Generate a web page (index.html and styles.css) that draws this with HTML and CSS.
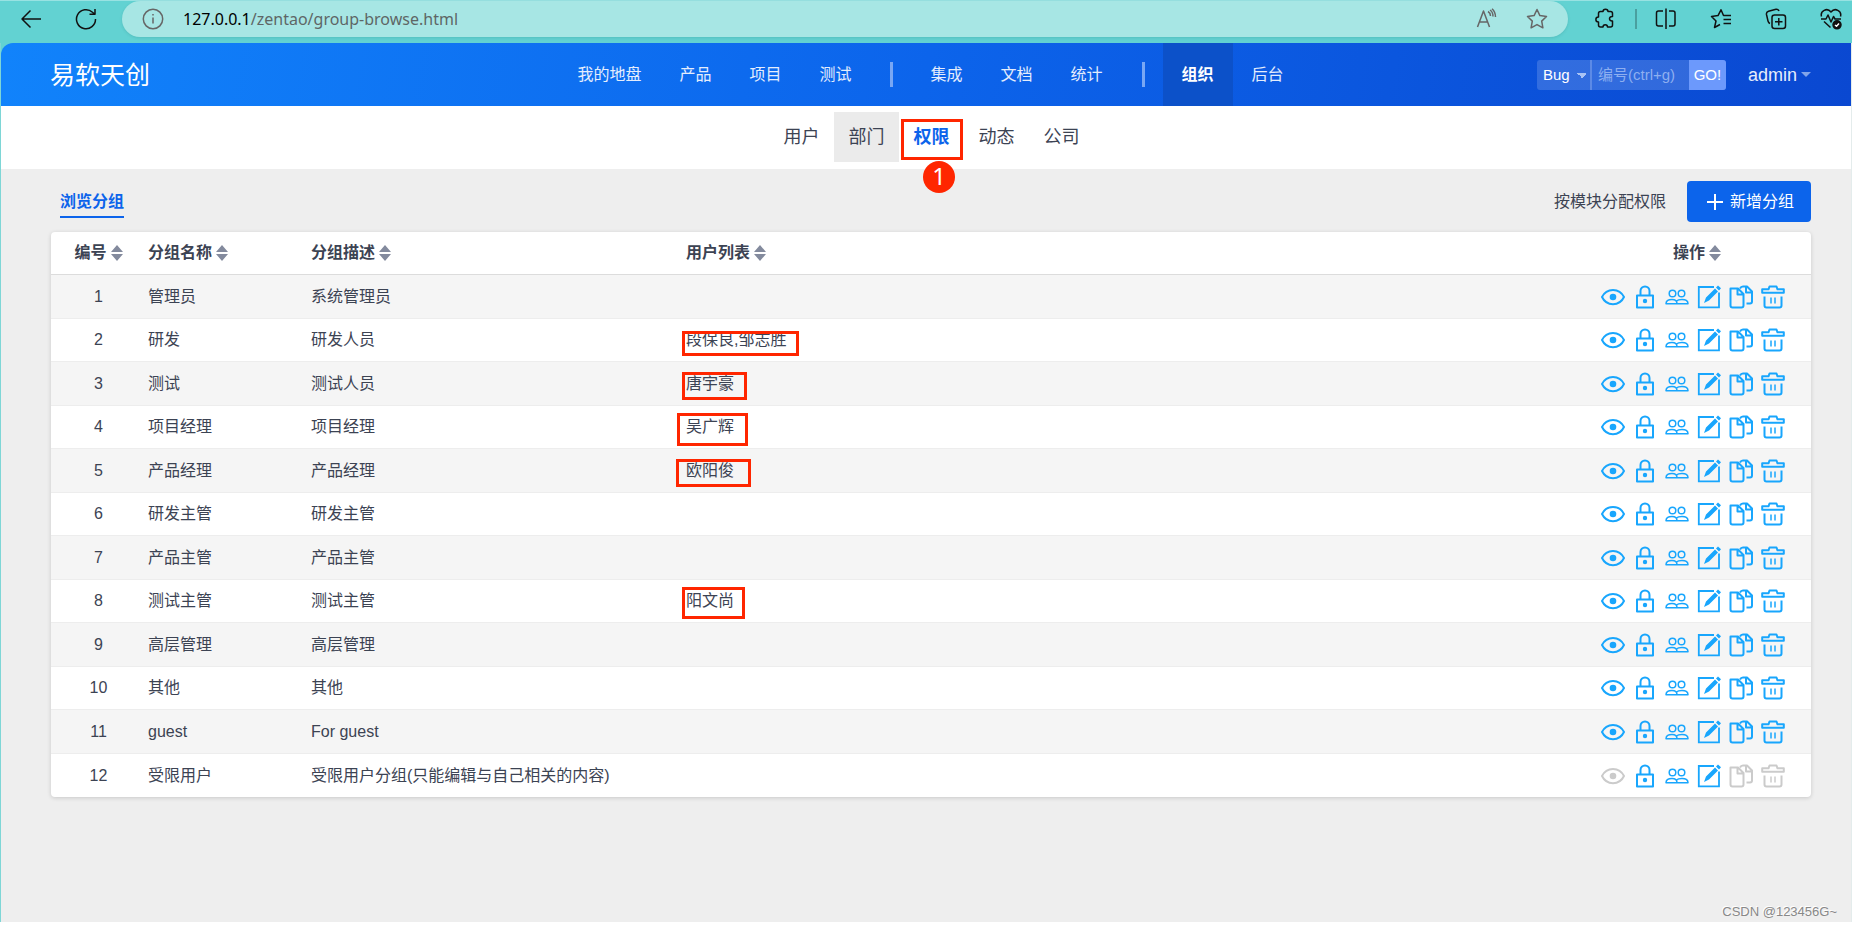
FILE: index.html
```html
<!DOCTYPE html>
<html lang="zh-CN">
<head>
<meta charset="utf-8">
<title>浏览分组</title>
<link rel="stylesheet" href="styles.css">
</head>
<body>
<svg class="sprite" aria-hidden="true">
  <symbol id="i-eye" viewBox="0 0 24 24"><path d="M1 12C5.500 2.500 18.500 2.500 23 12C18.500 21.500 5.500 21.500 1 12Z" fill="none" stroke="currentColor" stroke-width="2" stroke-linejoin="round"/><circle cx="12" cy="12" r="3.300" fill="currentColor"/></symbol>
  <symbol id="i-lock" viewBox="0 0 24 24"><path d="M4 10.500H20V22.500H4ZM7.500 10.500V6a4.500 4.500 0 0 1 9 0V10.500" fill="none" stroke="currentColor" stroke-width="2" stroke-linejoin="round"/><circle cx="12" cy="16" r="2.200" fill="currentColor"/></symbol>
  <symbol id="i-team" viewBox="0 0 24 24"><g fill="none" stroke="currentColor" stroke-width="1.500" stroke-linejoin="round"><circle cx="7.500" cy="8.500" r="3.300"/><circle cx="16.500" cy="8.500" r="3.300"/><path d="M1 18.700C1 15.500 3 14.500 7 14.500C10 14.500 12 15.500 12 18.700ZM12 18.700H23C23 15.500 21 14.500 17 14.500C14 14.500 12.500 15 11.500 16"/></g></symbol>
  <symbol id="i-edit" viewBox="0 0 24 24"><path d="M17 2H1.800V22.300H22V7.500" fill="none" stroke="currentColor" stroke-width="1.800"/><path d="M7 18L9 12.500L18 3.500L21 6.500L12 15.500ZM19 2.500L21 .500L24 3.300L22 5.500Z" fill="currentColor"/></symbol>
  <symbol id="i-copy" viewBox="0 0 24 24"><g fill="none" stroke="currentColor" stroke-width="2" stroke-linejoin="round"><path d="M1.500 3.500H9L14.500 9V20.500Q14.500 22.500 12.500 22.500H3.500Q1.500 22.500 1.500 20.500ZM8.500 4V9.500H14"/><path d="M11 3.500Q12 1.500 14 1.500H18L23 6.500V16.500Q23 18.500 21 18.500H17.500M17 2V7.500H22.500"/></g></symbol>
  <symbol id="i-trash" viewBox="0 0 24 24"><g fill="none" stroke="currentColor" stroke-width="2" stroke-linejoin="round"><path d="M1.200 7.800V4.300H7.500L8.500 1.500H15.500L16.500 4.300H22.800V7.800ZM3.500 11.500V20.500Q3.500 22.500 5.500 22.500H18.500Q20.500 22.500 20.500 20.500V11.500"/><path d="M10 12.500V18.500M14 12.500V18.500" stroke-width="1.500"/></g></symbol>
  <symbol id="i-sort" viewBox="0 0 12 16"><path d="M6 0L12 7H0ZM6 16L0 9H12Z" fill="currentColor"/></symbol>
</svg>

<div class="browser">
  <button class="chrome-btn back" aria-label="返回"><svg width="22" height="20" viewBox="0 0 22 20"><path d="M21 10H2M10.500 1.500L2 10L10.500 18.500"/></svg></button>
  <button class="chrome-btn reload" aria-label="刷新"><svg width="22" height="22" viewBox="0 0 22 22"><path d="M20.500 11A9.500 9.500 0 1 1 17.500 4.300L19.500 6M20 1V6.300H14.500"/></svg></button>
  <div class="address">
    <svg class="info" width="22" height="22" viewBox="0 0 22 22"><circle cx="11" cy="11" r="9.700"/><path d="M11 9.500V15.500M11 6V7.500"/></svg>
    <span class="url"><b>127.0.0.1</b>/zentao/group-browse.html</span>
    <svg width="22" height="22" viewBox="0 0 22 22"><path d="M1.500 19L7.500 3L13.500 19M3.500 14H11.500M12 3.500Q14.500 5 14.500 8M14 2Q17 4 17 8.500M16 .800Q19.500 4 19.500 9"/></svg>
    <svg width="22" height="22" viewBox="0 0 22 22"><path d="M11 1.500L13.900 7.600L20.500 8.500L15.700 13.100L16.900 19.800L11 16.600L5.100 19.800L6.300 13.100L1.500 8.500L8.100 7.600Z"/></svg>
  </div>
  <div class="chrome-tools">
    <button class="chrome-btn" aria-label="扩展"><svg width="22" height="22" viewBox="0 0 22 22"><path d="M6.500 3.500H9C9 .500 14 .500 14 3.500H16.500Q18.500 3.500 18.500 5.500V8.500C14.500 8 14.500 13.500 18.500 13V17Q18.500 19 16.500 19H13.500C13.500 16 9 16 9 19H6.500Q4.500 19 4.500 17V14C1 14 1 9 4.500 9V5.500Q4.500 3.500 6.500 3.500Z"/></svg></button>
    <span class="chrome-sep"></span>
    <button class="chrome-btn" aria-label="分屏"><svg width="22" height="22" viewBox="0 0 22 22"><path d="M8 3H3.500Q1.500 3 1.500 5V16Q1.500 18 3.500 18H8M14 3H18Q20 3 20 5V16Q20 18 18 18H14M11 .500V21"/></svg></button>
    <button class="chrome-btn" aria-label="收藏夹"><svg width="22" height="22" viewBox="0 0 22 22"><path d="M21 7.500H13.500L11 1.800L8 7.600L1.500 8.500L6 13L4.500 19.500L10 16.500M13.500 11.500H21M13.500 15.500H21"/></svg></button>
    <button class="chrome-btn" aria-label="集锦"><svg width="22" height="22" viewBox="0 0 22 22"><path d="M5 15.500Q3.500 15 3 13L1.500 6.500Q1 4 3.500 3.300L11 1.300Q13 1 14 3M9 7H18Q20.500 7 20.500 9.500V18Q20.500 20.500 18 20.500H9.500Q7 20.500 7 18V9.500Q7 7 9.500 7M13.800 10V17.500M10 13.800H17.500"/></svg></button>
    <button class="chrome-btn" aria-label="浏览器概要"><svg width="22" height="22" viewBox="0 0 22 22"><path d="M1.500 8.500C0 3 7 -1 11 4C15 -1 22 3 20.500 8.500M1 11H6L8 7L11 14L13.500 8.500L15 11H21M4 13.500L10.500 19.500"/><circle cx="17" cy="16.800" r="4" class="solid"/><path d="M15 17L16.500 18.300L19 15.500" class="tick"/></svg></button>
  </div>
</div>

<div class="app">
  <header class="topbar">
    <div class="brand">易软天创</div>
    <nav class="mainnav">
      <a href="#">我的地盘</a><a href="#">产品</a><a href="#">项目</a><a href="#">测试</a>
      <i class="divider"></i>
      <a href="#">集成</a><a href="#">文档</a><a href="#">统计</a>
      <i class="divider"></i>
      <a href="#" class="active">组织</a><a href="#">后台</a>
    </nav>
    <div class="tools">
      <form class="search">
        <select aria-label="搜索类型"><option>Bug</option></select>
        <input type="text" placeholder="编号(ctrl+g)" aria-label="编号">
        <button type="button">GO!</button>
      </form>
      <a href="#" class="user">admin</a>
    </div>
  </header>

  <nav class="subnav">
    <a href="#">用户</a>
    <a href="#" class="hover">部门</a>
    <a href="#" class="active">权限<span class="mark mark-nav"></span><span class="step">1</span></a>
    <a href="#">动态</a>
    <a href="#">公司</a>
  </nav>

  <main>
    <div class="toolbar">
      <a href="#" class="tab">浏览分组</a>
      <div class="actions">
        <a href="#" class="link">按模块分配权限</a>
        <button class="primary"><svg width="16" height="16" viewBox="0 0 16 16"><path d="M8 0V16M0 8H16" stroke="currentColor" stroke-width="2"/></svg>新增分组</button>
      </div>
    </div>
    <table class="groups">
      <thead>
        <tr>
          <th class="col-id">编号<svg class="sort"><use href="#i-sort"/></svg></th>
          <th class="col-name">分组名称<svg class="sort"><use href="#i-sort"/></svg></th>
          <th class="col-desc">分组描述<svg class="sort"><use href="#i-sort"/></svg></th>
          <th>用户列表<svg class="sort"><use href="#i-sort"/></svg></th>
          <th class="col-ops">操作<svg class="sort"><use href="#i-sort"/></svg></th>
        </tr>
      </thead>
      <tbody id="rows"></tbody>
    </table>
    <div class="watermark">CSDN @123456G~</div>
  </main>
</div>
<script src="script.js"></script>
</body>
</html>
```
FILE: styles.css
```css
* { box-sizing: border-box; }
body {
  margin: 0;
  min-height: 100vh;
  display: flex;
  flex-direction: column;
  background: #fff;
  color: #3c4353;
  font: 16px/20px "Liberation Sans", "Noto Sans CJK SC", sans-serif;
}
a { color: inherit; text-decoration: none; }
button, input, select { font: inherit; color: inherit; border: 0; margin: 0; padding: 0; background: none; }
.sprite { position: absolute; width: 0; height: 0; }

/* browser bar */
.browser {
  height: 43px;
  display: flex;
  align-items: flex-start;
  padding: 0 10px 0 20px;
  background: #62d2d2;
  border-top: 1px solid #98e2e2;
}
.browser svg { display: block; fill: none; stroke: #111; stroke-width: 1.5; stroke-linejoin: round; }
.browser .solid { fill: #111; }
.browser .tick { stroke: #fff; }
.chrome-btn { height: 36px; display: flex; align-items: center; }
.back { margin-right: 33px; }
.reload { margin-right: 25px; }
.address {
  flex: 1;
  height: 36px;
  display: flex;
  align-items: center;
  gap: 28px;
  padding: 0 20px;
  background: #a7e6e4;
  border-radius: 18px;
  box-shadow: 0 1px 3px rgba(0, 80, 80, .15);
}
.address svg { stroke: #666; }
.url { flex: 1; margin-left: -9px; color: #5e6666; font-family: "Noto Sans", sans-serif; }
.url b { color: #000; font-weight: 400; }
.chrome-tools { display: flex; align-items: center; gap: 33px; margin-left: 26px; }
.chrome-sep { width: 2px; height: 20px; margin: 0 -15px 0 -14px; background: #4a9f9f; }

/* application header */
.app {
  flex: 1;
  display: flex;
  flex-direction: column;
  margin-bottom: 5px;
  border-left: 1px solid #7ed6d6;
  border-right: 1px solid #e4ecec;
  background: linear-gradient(#62d2d2 20px, #eee 20px);
}
.topbar {
  height: 63px;
  display: grid;
  grid-template-columns: 1fr auto 1fr;
  align-items: center;
  padding: 0 40px 0 49px;
  border-radius: 12px 0 0 0;
  background: linear-gradient(100deg, #1183fb, #0c64eb 50%, #0a48d1);
  color: #fff;
}
.brand { font-size: 25px; line-height: 36px; }
.mainnav { display: flex; align-items: center; height: 63px; }
.mainnav a { padding: 0 19px; line-height: 63px; color: #e4edfd; }
.mainnav .active { background: #0c51c9; color: #fff; font-weight: 700; }
.divider { width: 3px; height: 25px; margin: 0 18px 0 20px; background: #78a7f4; }
.tools { display: flex; justify-content: flex-end; align-items: center; gap: 22px; }
.search { display: flex; height: 30px; border-radius: 3px; overflow: hidden; font-size: 15px; background: rgba(255, 255, 255, .16); }
.search select {
  appearance: none;
  width: 55px;
  padding-left: 6px;
  color: #fff;
  border-right: 2px solid #5c8ae6;
  background: linear-gradient(to bottom right, #a9c3f4 50%, transparent 50%) 45px 13px / 5px 5px no-repeat,
    linear-gradient(to bottom left, #a9c3f4 50%, transparent 50%) 40px 13px / 5px 5px no-repeat;
}
.search input { width: 97px; padding-left: 6px; }
.search input::placeholder { color: #8eaff0; }
.search button { width: 37px; background: #6c99fc; color: #fff; }
.user { display: flex; align-items: center; gap: 4px; font-size: 18px; color: #e6edfb; }
.user::after { content: ""; border: 5px solid transparent; border-top-color: #82a4e9; border-bottom: 0; }

/* second level navigation */
.subnav {
  height: 63px;
  display: flex;
  justify-content: center;
  align-items: flex-start;
  padding: 6px 39px 0 50px;
  background: #fff;
  font-size: 18px;
}
.subnav a { position: relative; width: 65px; line-height: 50px; text-align: center; }
.subnav .hover { background: #ebebeb; }
.subnav .active { color: #0c64eb; font-weight: 700; }
.mark { position: absolute; border: 3px solid #ff2600; }
.mark-nav { left: 2px; top: 7px; width: 62px; height: 41px; }
.step {
  position: absolute;
  left: 24px;
  top: 49px;
  width: 32px;
  height: 32px;
  border-radius: 50%;
  background: #ff2600;
  color: #fff;
  font: 24px/30px "Noto Sans", sans-serif;
}

/* content */
main { position: relative; flex: 1; padding: 12px 40px 40px 50px; }
.toolbar { display: flex; justify-content: space-between; align-items: center; height: 41px; margin-bottom: 10px; }
.tab { margin-left: 9px; padding: 4px 0 2px; border-bottom: 2px solid #0c64eb; color: #0c64eb; font-weight: 700; line-height: 24px; }
.actions { display: flex; align-items: center; gap: 21px; }
.primary {
  display: flex;
  align-items: center;
  gap: 7px;
  height: 41px;
  padding: 0 17px 0 20px;
  border-radius: 4px;
  background: #0c64eb;
  color: #fff;
}
.groups {
  width: 100%;
  table-layout: fixed;
  border-collapse: separate;
  border-spacing: 0;
  border-radius: 4px;
  background: #fff;
  box-shadow: 0 1px 4px rgba(0, 0, 0, .16);
}
.groups th { height: 43px; padding: 0 8px; text-align: left; color: #3c4353; border-bottom: 1px solid #dcdcdc; }
.groups td { height: 44px; padding: 0 8px; border-bottom: 1px solid #ededed; }
.groups tbody tr:nth-child(odd) { background: #f5f5f5; }
.groups tbody tr:nth-child(even) td { height: 43px; }
.groups tbody tr:last-child td { border-bottom: 0; }
.groups .col-id { width: 89px; padding-left: 14px; text-align: center; }
.col-name { width: 163px; }
.col-desc { width: 375px; }
.groups .col-ops { width: 238px; padding-left: 18px; text-align: center; }
.sort { width: 12px; height: 16px; margin-left: 4px; vertical-align: -3px; color: #838a9d; }
.ops { display: flex; justify-content: center; gap: 8px; padding-left: 2px; }
.ops button { display: flex; width: 24px; height: 24px; color: #18a6fd; }
.ops button:disabled { color: #cbcbcb; }
.ops svg { width: 24px; height: 24px; }
.users { position: relative; display: inline-block; }
.m2 { left: -4px; top: 1px; width: 117px; height: 25px; }
.m3 { left: -4px; top: -2px; width: 65px; height: 28px; }
.m4 { left: -9px; top: -4px; width: 71px; height: 33px; }
.m5 { left: -10px; top: -2px; width: 75px; height: 28px; }
.m8 { left: -4px; top: -4px; width: 63px; height: 32px; }
.watermark { position: absolute; right: 14px; bottom: 0; font-size: 13px; color: #888; text-shadow: -1px -1px 0 #fff; }
```
FILE: script.js
```js
const groups = [
  [1, '管理员', '系统管理员', ''],
  [2, '研发', '研发人员', '段保良,邹志胜'],
  [3, '测试', '测试人员', '唐宇豪'],
  [4, '项目经理', '项目经理', '吴广辉'],
  [5, '产品经理', '产品经理', '欧阳俊'],
  [6, '研发主管', '研发主管', ''],
  [7, '产品主管', '产品主管', ''],
  [8, '测试主管', '测试主管', '阳文尚'],
  [9, '高层管理', '高层管理', ''],
  [10, '其他', '其他', ''],
  [11, 'guest', 'For guest', ''],
  [12, '受限用户', '受限用户分组(只能编辑与自己相关的内容)', '']
];
const actions = [['eye', '视图'], ['lock', '权限'], ['team', '成员'], ['edit', '编辑'], ['copy', '复制'], ['trash', '删除']];
const lockedForLimited = ['eye', 'copy', 'trash'];

document.getElementById('rows').innerHTML = groups.map(([id, name, desc, users]) => {
  const buttons = actions.map(([icon, label]) => {
    const off = id === 12 && lockedForLimited.includes(icon) ? ' disabled' : '';
    return `<button aria-label="${label}"${off}><svg><use href="#i-${icon}"/></svg></button>`;
  }).join('');
  const people = users ? `<span class="users">${users}<span class="mark m${id}"></span></span>` : '';
  return `<tr><td class="col-id">${id}</td><td>${name}</td><td>${desc}</td><td>${people}</td><td><div class="ops">${buttons}</div></td></tr>`;
}).join('');
```
